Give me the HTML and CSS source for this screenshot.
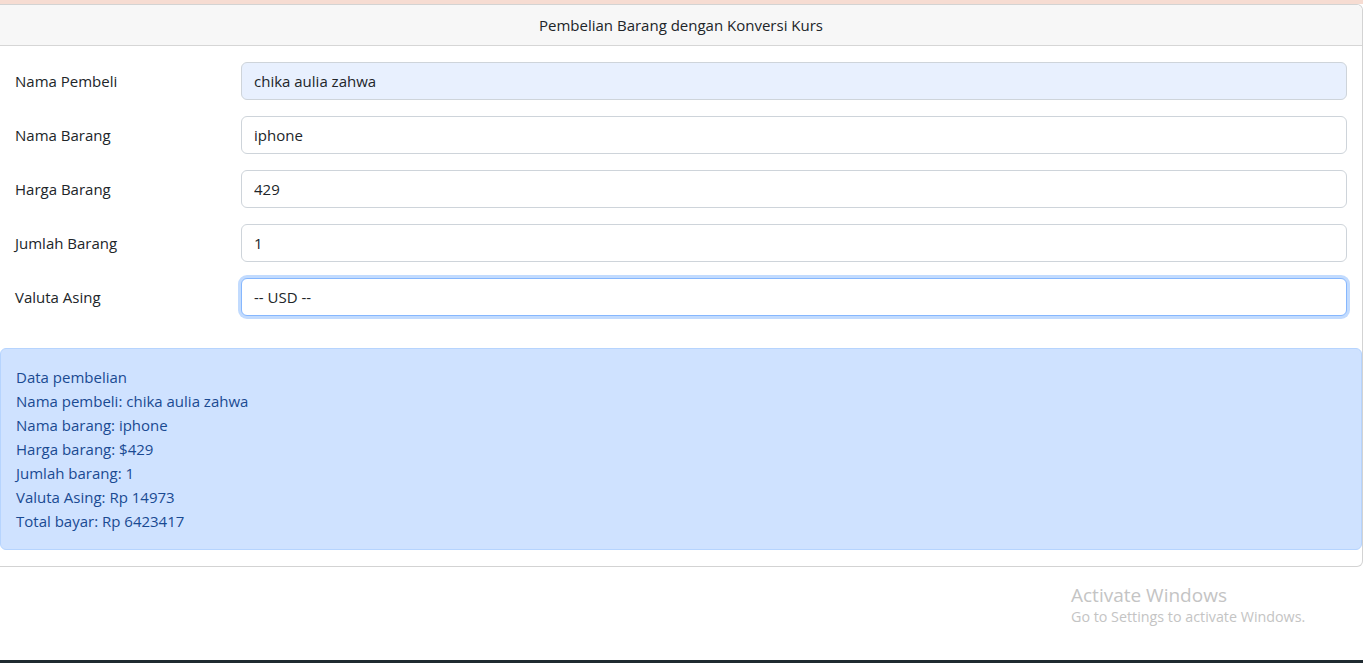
FILE: index.html
```html
<!DOCTYPE html>
<html lang="id">
<head>
<meta charset="utf-8">
<title>Pembelian Barang dengan Konversi Kurs</title>
<link rel="stylesheet" href="styles.css">
</head>
<body>
<div class="topstrip"></div>
<div class="card">
  <div class="card-header">Pembelian Barang dengan Konversi Kurs</div>
  <div class="card-body">
    <form class="form">
      <div class="row">
        <label class="label">Nama Pembeli</label>
        <input class="control autofill" type="text" value="chika aulia zahwa">
      </div>
      <div class="row">
        <label class="label">Nama Barang</label>
        <input class="control" type="text" value="iphone">
      </div>
      <div class="row">
        <label class="label">Harga Barang</label>
        <input class="control" type="text" value="429">
      </div>
      <div class="row">
        <label class="label">Jumlah Barang</label>
        <input class="control" type="text" value="1">
      </div>
      <div class="row">
        <label class="label">Valuta Asing</label>
        <div class="control focused">-- USD --</div>
      </div>
    </form>
  </div>
  <div class="alert">
    <div>Data pembelian</div>
    <div>Nama pembeli: chika aulia zahwa</div>
    <div>Nama barang: iphone</div>
    <div>Harga barang: $429</div>
    <div>Jumlah barang: 1</div>
    <div>Valuta Asing: Rp 14973</div>
    <div>Total bayar: Rp 6423417</div>
  </div>
</div>
<div class="watermark">
  <div class="wm-title">Activate Windows</div>
  <div class="wm-sub">Go to Settings to activate Windows.</div>
</div>
<div class="taskbar"></div>
</body>
</html>
```

FILE: styles.css
```css
* { box-sizing: border-box; }
html, body {
  margin: 0;
  padding: 0;
  height: 663px;
  overflow: hidden;
  background: #fff;
  font-family: "Open Sans", "Noto Sans", sans-serif;
  font-size: 15px;
  color: #212529;
}
body {
  position: relative;
  display: flex;
  flex-direction: column;
}
.topstrip {
  height: 4px;
  background: #f6dcd2;
}
.card {
  border: 1px solid #d3d3d3;
  border-left: none;
  border-radius: 0 6px 6px 0;
  width: 1363px;
}
.card-header {
  height: 41px;
  background: #f7f7f7;
  border-bottom: 1px solid #d6d6d6;
  display: flex;
  align-items: center;
  justify-content: center;
  border-top-right-radius: 6px;
}
.card-body {
  padding: 16px 15px 16px 15px;
}
.form {
  display: flex;
  flex-direction: column;
  gap: 16px;
  margin-bottom: 16px;
}
.row {
  display: flex;
  align-items: center;
}
.label {
  width: 226px;
  flex: none;
  line-height: 24px;
}
.control {
  flex: 1;
  height: 38px;
  border: 1px solid #ced4da;
  border-radius: 6px;
  padding: 6px 12px;
  font: inherit;
  color: #212529;
  background: #fff;
  line-height: 24px;
  outline: none;
  margin: 0;
}
.autofill {
  background: #e8f0fe;
}
.focused {
  border-color: #86b7fe;
  box-shadow: 0 0 0 3px #c2dbfe;
  display: flex;
  align-items: center;
}
.alert {
  background: #cfe2ff;
  border: 1px solid #b6d4fe;
  border-radius: 6px;
  color: #1a4a92;
  padding: 16px 15px;
  margin: 0 0 16px 0;
  line-height: 24px;
  height: 202px;
}
.watermark {
  position: absolute;
  left: 1071px;
  top: 583px;
  color: #c4c4c4;
}
.wm-title {
  font-size: 19px;
  line-height: 24px;
}
.wm-sub {
  font-size: 14.3px;
  line-height: 20px;
}
.taskbar {
  position: absolute;
  left: 0;
  bottom: 0;
  width: 100%;
  height: 3px;
  background: #1f2a30;
}
```
